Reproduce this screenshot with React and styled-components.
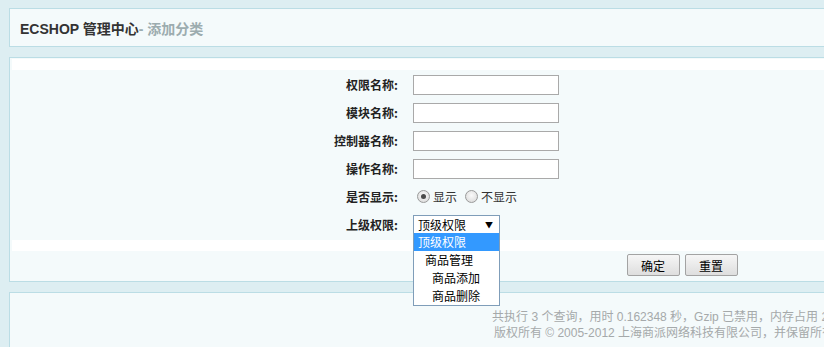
import React from 'react'
import styled, { createGlobalStyle } from 'styled-components'

const GlobalStyle = createGlobalStyle`
  html, body {
    margin: 0;
    padding: 0;
    background: #ddeef2;
    overflow: hidden;
  }
  body {
    font-family: "Liberation Sans", "Noto Sans CJK SC", sans-serif;
    font-size: 12px;
    color: #333;
  }
`

const Page = styled.div`
  width: 1346px;
  padding: 8px 9px;
  display: flex;
  flex-direction: column;
  gap: 10px;
`

const Panel = styled.div`
  border: 1px solid #bbdde5;
  background: #f4fafb;
`

const TitleBar = styled(Panel)`
  height: 37px;
  display: flex;
  align-items: center;
  padding-left: 10px;
  font-size: 14px;
  font-weight: bold;
  color: #333;
`

const SubTitle = styled.span`
  color: #9cacaf;
`

const MainPanel = styled(Panel)`
  padding: 1px 2px 5px;
`

const WhiteStrip = styled.div`
  height: 11px;
  background: #fff;
`

const FormGrid = styled.div`
  display: grid;
  grid-template-columns: 389px 1fr;
  column-gap: 12px;
  grid-auto-rows: 28px;
  padding-bottom: 2px;
`

const Label = styled.div`
  display: flex;
  align-items: center;
  justify-content: flex-end;
  padding-right: 3px;
  font-family: "Noto Sans CJK SC", sans-serif;
  font-weight: bold;
  font-size: 12px;
  color: #222;
`

const Field = styled.div`
  display: flex;
  align-items: center;
  position: relative;
`

const TextInput = styled.input`
  box-sizing: border-box;
  width: 146px;
  height: 20px;
  margin: 1px 0 0;
  border: 1px solid #a9a9a9;
  background: #fff;
  padding: 0 2px;
`

const RadioItem = styled.label`
  display: flex;
  align-items: center;
  margin-left: ${({ first }) => (first ? '4px' : '8px')};
  font-family: "Noto Sans CJK SC", sans-serif;
  font-size: 12px;
  color: #333;
`

const RadioDot = styled.span`
  box-sizing: border-box;
  width: 13px;
  height: 13px;
  border-radius: 50%;
  border: 1px solid #9a9a9a;
  background: radial-gradient(circle at 50% 40%, #fafafa, #d6d6d6);
  margin-right: 3px;
  display: flex;
  align-items: center;
  justify-content: center;
  &::after {
    content: '';
    width: 5px;
    height: 5px;
    border-radius: 50%;
    background: ${({ checked }) => (checked ? '#4a4a4a' : 'transparent')};
  }
`

const SelectBox = styled.div`
  box-sizing: border-box;
  width: 87px;
  height: 19px;
  margin-top: 1px;
  border: 1px solid #7f9db9;
  background: #fff;
  display: flex;
  align-items: center;
  justify-content: space-between;
  padding: 0 6px 0 4px;
  font-family: "Noto Sans CJK SC", sans-serif;
  font-size: 12px;
  color: #000;
`

const Arrow = styled.span`
  font-size: 8px;
  color: #000;
`

const DropList = styled.ul`
  position: absolute;
  left: 0;
  top: 23px;
  z-index: 5;
  box-sizing: border-box;
  width: 87px;
  margin: 0;
  padding: 0;
  list-style: none;
  border: 1px solid #7f9db9;
  border-top: none;
  background: #fff;
`

const Option = styled.li`
  height: 18px;
  line-height: 18px;
  padding-left: ${({ level }) => 4 + level * 7}px;
  font-family: "Noto Sans CJK SC", sans-serif;
  font-size: 12px;
  color: ${({ active }) => (active ? '#fff' : '#000')};
  background: ${({ active }) => (active ? '#3399ff' : '#fff')};
`

const ButtonRow = styled.div`
  display: flex;
  justify-content: center;
  gap: 5px;
  padding-top: 3px;
`

const Button = styled.button`
  width: 53px;
  height: 22px;
  padding: 0;
  border: 1px solid #a3a3a3;
  border-radius: 2px;
  background: linear-gradient(#f6f6f6, #dedede);
  font-family: "Noto Sans CJK SC", sans-serif;
  font-size: 12px;
  color: #000;
`

const Footer = styled(Panel)`
  height: 80px;
  padding-top: 16px;
  text-align: center;
  line-height: 16px;
  font-family: "Liberation Sans", "Noto Sans CJK SC", sans-serif;
  font-size: 12px;
  color: #a5a9aa;
`

const fields = ['权限名称:', '模块名称:', '控制器名称:', '操作名称:']

const options = [
  { text: '顶级权限', level: 0, active: true },
  { text: '商品管理', level: 1 },
  { text: '商品添加', level: 2 },
  { text: '商品删除', level: 2 },
]

const App = () => {
  return (
    <>
      <GlobalStyle />
      <Page>
        <TitleBar>
          ECSHOP 管理中心<SubTitle>- 添加分类</SubTitle>
        </TitleBar>
        <MainPanel>
          <WhiteStrip />
          <FormGrid>
            {fields.map((f) => (
              <React.Fragment key={f}>
                <Label>{f}</Label>
                <Field>
                  <TextInput type="text" />
                </Field>
              </React.Fragment>
            ))}
            <Label>是否显示:</Label>
            <Field>
              <RadioItem first>
                <RadioDot checked />显示
              </RadioItem>
              <RadioItem>
                <RadioDot />不显示
              </RadioItem>
            </Field>
            <Label>上级权限:</Label>
            <Field>
              <SelectBox>
                顶级权限<Arrow>▼</Arrow>
              </SelectBox>
              <DropList>
                {options.map((o) => (
                  <Option key={o.text} level={o.level} active={o.active}>
                    {o.text}
                  </Option>
                ))}
              </DropList>
            </Field>
          </FormGrid>
          <WhiteStrip />
          <ButtonRow>
            <Button>确定</Button>
            <Button>重置</Button>
          </ButtonRow>
        </MainPanel>
        <Footer>
          <div>共执行 3 个查询，用时 0.162348 秒，Gzip 已禁用，内存占用 2.116 MB</div>
          <div>版权所有 © 2005-2012 上海商派网络科技有限公司，并保留所有权利。</div>
        </Footer>
      </Page>
    </>
  )
}

export default App
